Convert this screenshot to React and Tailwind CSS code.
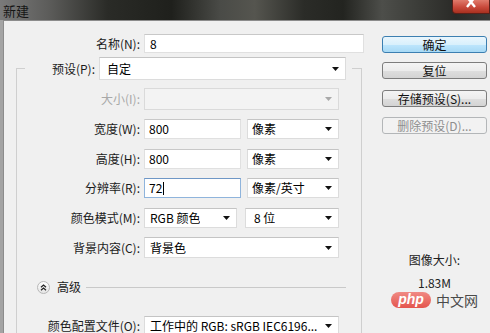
import React from 'react';

const Arrow = ({ gray }) => (
  <svg width="7" height="4" viewBox="0 0 7 4" className="shrink-0">
    <path d="M0 0h7L3.5 4z" fill={gray ? '#a9a9a9' : '#111'} />
  </svg>
);

const Select = ({ value, className, disabled }) => (
  <div
    className={`${className} flex items-center justify-between pl-[5px] pr-[6px] border ${
      disabled ? 'bg-[#f3f3f3] border-[#dadada]' : 'bg-white border-[#dcdcdc] border-t-[#c4c4c4]'
    }`}
  >
    <span className="truncate">{value}</span>
    <Arrow gray={disabled} />
  </div>
);

const Input = ({ value, className, focused }) => (
  <div
    className={`${className} flex items-center pl-[4px] bg-white border ${
      focused ? 'border-[#8fb4dc] border-t-[#6f97c6]' : 'border-[#e0e0e0] border-t-[#c8c8c8]'
    }`}
  >
    {value}
    {focused && <span className="w-px h-[13px] bg-black ml-px" />}
  </div>
);

const Label = ({ children, disabled }) => (
  <div className={`w-[127px] shrink-0 pr-[4px] text-right ${disabled ? 'text-[#a8a8a8]' : 'text-[#1b1b1b]'}`}>
    {children}
  </div>
);

const Button = ({ children, primary, disabled, className }) => (
  <div
    className={`${className} w-[105px] h-[17px] flex items-center justify-center rounded-[3px] border ${
      primary
        ? 'border-[#3c7fb1] bg-[linear-gradient(#eaf6fd,#d9f0fc_50%,#bee6fd_51%,#a7d9f5)] text-[#111]'
        : disabled
        ? 'border-[#b3b6b8] bg-[#f2f2f2] text-[#8e8e8e]'
        : 'border-[#7d7d7d] bg-[linear-gradient(#f4f4f4,#ececec_50%,#dedede_51%,#d3d3d3)] text-[#111]'
    }`}
  >
    {children}
  </div>
);

export default function App() {
  return (
    <div className="w-[490px] h-[333px] overflow-hidden bg-[#a4a4a4] text-[12px] leading-[16px] font-['Noto_Sans_CJK_SC',sans-serif]">
      {/* title bar */}
      <div className="relative h-[20px] bg-[linear-gradient(90deg,#7a7a7a_0%,#5c5c5a_10%,#2a2b27_22%,#1f201c_35%,#4a4b47_45%,#55554f_52%,#2b2c28_62%,#232420_70%,#4d4e4a_78%,#3a3b37_86%,#2a2a27_93%,#383836_100%)] flex items-center px-[3px]">
        <span className="text-[13px] text-[#161616] leading-none">新建</span>
        <div className="absolute right-0 top-0 w-[38px] h-[14px] rounded-bl-[4px] border border-t-0 border-[#5a2019] bg-[linear-gradient(#e07b6c,#c9493b_55%,#a8301f)] flex justify-center">
          <svg width="11" height="9" viewBox="0 0 11 9">
            <path d="M1 -3L9 7M9 -3L1 7" stroke="#fff" strokeWidth="2.4" />
          </svg>
        </div>
      </div>

      {/* body */}
      <div className="ml-[3px] h-[313px] bg-[#f0f0f0] border-l border-t border-[#8c8c8c] flex overflow-hidden">
        {/* form */}
        <div className="w-[361px] shrink-0 pt-[13px]">
          <div className="flex items-center h-[19px]">
            <div className="w-[140px] pr-[4px] text-right text-[#1b1b1b]">名称(N):</div>
            <Input value="8" className="w-[220px] h-[19px] pl-[5px]" />
          </div>

          <fieldset className="ml-[12px] mt-[4px] w-[346px] h-[300px] border border-b-0 border-[#cfcfcf]">
            <legend className="ml-[8px] pr-[6px]">
              <div className="flex items-center">
                <div className="w-[74px] pr-[4px] text-right text-[#1b1b1b]">预设(P):</div>
                <Select value="自定" className="w-[247px] h-[23px] !pl-[7px]" />
              </div>
            </legend>

            <div className="flex flex-col">
              <div className="flex items-center mt-[8px] h-[22px]">
                <Label disabled>大小(I):</Label>
                <Select value="" disabled className="w-[195px] h-[22px]" />
              </div>

              <div className="flex items-center mt-[9px] h-[20px]">
                <Label>宽度(W):</Label>
                <Input value="800" className="w-[97px] h-[20px]" />
                <Select value="像素" className="ml-[6px] w-[92px] h-[20px] !pl-[4px]" />
              </div>

              <div className="flex items-center mt-[10px] h-[20px]">
                <Label>高度(H):</Label>
                <Input value="800" className="w-[97px] h-[20px]" />
                <Select value="像素" className="ml-[6px] w-[92px] h-[20px] !pl-[4px]" />
              </div>

              <div className="flex items-center mt-[9px] h-[20px]">
                <Label>分辨率(R):</Label>
                <Input value="72" focused className="w-[97px] h-[20px]" />
                <Select value="像素/英寸" className="ml-[6px] w-[92px] h-[20px] !pl-[4px]" />
              </div>

              <div className="flex items-center mt-[10px] h-[20px]">
                <Label>颜色模式(M):</Label>
                <Select value="RGB 颜色" className="w-[93px] h-[20px]" />
                <Select value="8 位" className="ml-[8px] w-[94px] h-[20px] !pl-[8px]" />
              </div>

              <div className="flex items-center mt-[9px] h-[21px]">
                <Label>背景内容(C):</Label>
                <Select value="背景色" className="w-[195px] h-[21px]" />
              </div>

              <div className="flex items-center mt-[22px] h-[14px] pl-[20px] pr-[15px]">
                <div className="w-[13px] h-[13px] rounded-full border border-[#b8b8b8] bg-[linear-gradient(#ffffff,#e4e4e4)] flex items-center justify-center">
                  <svg width="7" height="7" viewBox="0 0 7 7">
                    <path d="M1 3.2L3.5 1 6 3.2M1 6.2L3.5 4 6 6.2" fill="none" stroke="#222" strokeWidth="1.2" />
                  </svg>
                </div>
                <span className="ml-[7px] text-[#1b1b1b]">高级</span>
                <div className="ml-[5px] flex-1 h-px bg-[#c9c9c9]" />
              </div>

              <div className="flex items-center mt-[22px] h-[20px]">
                <Label>颜色配置文件(O):</Label>
                <Select value="工作中的 RGB: sRGB IEC6196..." className="w-[195px] h-[20px]" />
              </div>
            </div>
          </fieldset>
        </div>

        {/* buttons */}
        <div className="flex-1 pl-[17px] pt-[15px] flex flex-col">
          <Button primary>确定</Button>
          <Button className="mt-[9px]">复位</Button>
          <Button className="mt-[11px]">存储预设(S)...</Button>
          <Button disabled className="mt-[10px]">删除预设(D)...</Button>

          <div className="w-[105px] mt-[118px] flex flex-col items-center text-[#222]">
            <div>图像大小:</div>
            <div className="mt-[7px]">1.83M</div>
            <div className="mt-[1px] flex items-center gap-[5px]">
              <div className="w-[40px] h-[16px] rounded-full bg-[linear-gradient(#f08a84,#e4554d)] flex items-center justify-center">
                <span className="text-white italic font-bold text-[14px] leading-none font-['Liberation_Sans',sans-serif] -mt-[2px]">php</span>
              </div>
              <span className="text-[14px] text-[#4a4a4a]">中文网</span>
            </div>
          </div>
        </div>
      </div>
    </div>
  );
}
